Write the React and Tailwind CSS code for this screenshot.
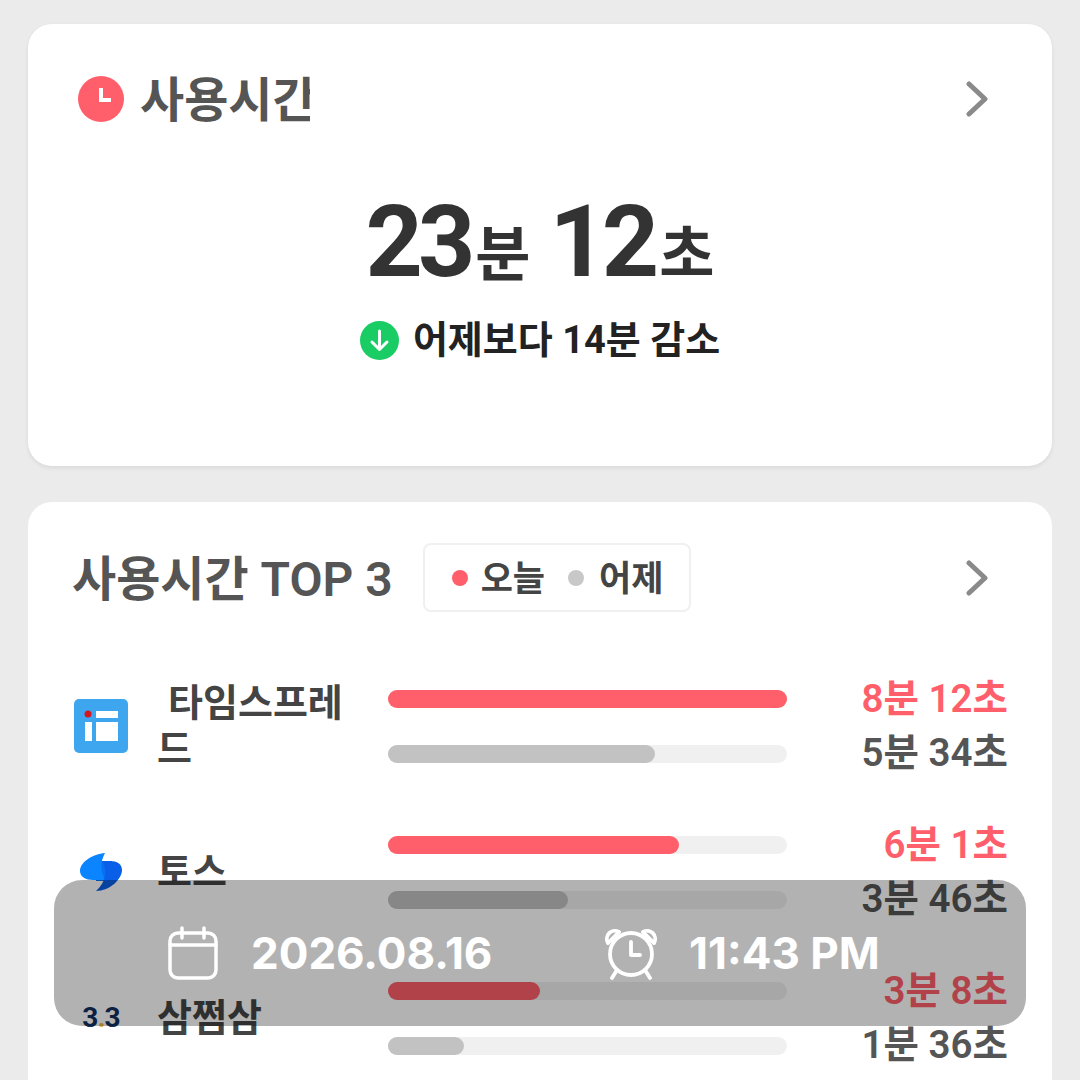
import React from "react";

const font = "font-['Roboto','Noto_Sans_CJK_KR',sans-serif]";

const apps = [
  { name: "타임스프레드", icon: "sheet", today: "8분 12초", todayW: "100%", yest: "5분 34초", yestW: "67%" },
  { name: "토스", icon: "toss", today: "6분 1초", todayW: "73%", yest: "3분 46초", yestW: "45%" },
  { name: "삼쩜삼", icon: "three", today: "3분 8초", todayW: "38%", yest: "1분 36초", yestW: "19%" },
];

const Chevron = () => (
  <svg width="24" height="36" viewBox="0 0 24 36" fill="none" stroke="#8a8a8a" strokeWidth="5" strokeLinecap="round" strokeLinejoin="round">
    <path d="M4 3l16 15L4 33" />
  </svg>
);

const AppIcon = ({ type }) => {
  if (type === "sheet") {
    return (
      <svg width="54" height="54" viewBox="0 0 54 54">
        <rect width="54" height="54" rx="5" fill="#3ea6ee" />
        <rect x="22" y="12" width="22" height="7" fill="#fff" />
        <rect x="11" y="23" width="7" height="19" fill="#fff" />
        <rect x="22" y="23" width="22" height="19" fill="#fff" />
        <circle cx="14" cy="15" r="3.5" fill="#d4161f" />
      </svg>
    );
  }
  if (type === "toss") {
    return (
      <svg width="42" height="38" viewBox="0 0 42 38">
        <path d="M16 8h16v20H16z" fill="#0a6ff0" />
        <path d="M25 0C13 1 0 9 0 18c0 6 6 9 13 9h13c-6-8-6-18-1-27z" fill="#0a84ff" />
        <path d="M16 38c14 0 26-12 26-21 0-6-5-9-12-9h-8c6 9 4 21-6 30z" fill="#0a5fe8" />
      </svg>
    );
  }
  return (
    <span className="text-[28px] leading-none font-bold text-[#12305f] tracking-[-1px]">
      3<span className="text-[#e9b54a]">.</span>3
    </span>
  );
};

const Bar = ({ width, color }) => (
  <div className="h-[18px] w-full rounded-full bg-[#f0f0f0]">
    <div className={`h-full rounded-full ${color}`} style={{ width }} />
  </div>
);

const AppRow = ({ app }) => (
  <div className="flex h-[108px] items-center">
    <div className="flex w-[58px] shrink-0 justify-center">
      <AppIcon type={app.icon} />
    </div>
    <div className="ml-[27px] w-[203px] shrink-0 text-[38px] leading-[46px] font-bold text-[#444] break-all">
      {app.icon === "sheet" ? <span className="ml-[11px]" /> : null}
      {app.name}
    </div>
    <div className="ml-[28px] flex w-[399px] shrink-0 flex-col gap-[37px]">
      <Bar width={app.todayW} color="bg-[#ff5f6b]" />
      <Bar width={app.yestW} color="bg-[#c2c2c2]" />
    </div>
    <div className="flex-1 text-right text-[38.5px] leading-[54px] font-semibold whitespace-nowrap">
      <div className="text-[#ff5f6b]">{app.today}</div>
      <div className="text-[#555]">{app.yest}</div>
    </div>
  </div>
);

const App = () => {
  return (
    <div className={`relative h-[1080px] w-[1080px] overflow-hidden bg-[#ebebeb] px-[28px] pt-[24px] ${font}`}>
      <div className="h-[442px] rounded-[24px] bg-white pt-[52px] shadow-[0_2px_4px_rgba(0,0,0,0.08)]">
        <div className="flex h-[46px] items-center justify-between pr-[63px] pl-[50px]">
          <div className="flex items-center gap-[16px]">
            <svg width="46" height="46" viewBox="0 0 46 46">
              <circle cx="23" cy="23" r="23" fill="#ff5f6b" />
              <path d="M23 12v12h10" fill="none" stroke="#fff" strokeWidth="4" />
            </svg>
            <div className="w-[170px] overflow-hidden pt-[4px] text-[48px] leading-[50px] font-semibold whitespace-nowrap text-[#555]">사용시간</div>
          </div>
          <Chevron />
        </div>
        <div className="mt-[75px] text-center text-[#333] leading-[90px] font-bold whitespace-nowrap">
          <span className="text-[100px] tracking-[-5px]">23</span>
          <span className="ml-[5px] text-[60px]">분 </span>
          <span className="ml-[4px] text-[100px] tracking-[-5px]">12</span>
          <span className="ml-[5px] text-[60px]">초</span>
        </div>
        <div className="mt-[2px] flex items-center justify-center gap-[14px]">
          <svg width="39" height="39" viewBox="0 0 39 39">
            <circle cx="19.5" cy="19.5" r="19.5" fill="#19cc63" />
            <path d="M19.5 10v18M12 21l7.5 7.5L27 21" fill="none" stroke="#fff" strokeWidth="3" strokeLinecap="round" strokeLinejoin="round" />
          </svg>
          <div className="text-[38px] leading-[44px] font-bold text-[#222]">어제보다 14분 감소</div>
        </div>
      </div>

      <div className="mt-[36px] h-[700px] rounded-[24px] bg-white px-[44px] pt-[41px]">
        <div className="flex h-[69px] items-center">
          <div className="pt-[4px] text-[48px] leading-none font-semibold whitespace-nowrap text-[#555]">사용시간 TOP 3</div>
          <div className="ml-[30px] flex h-[69px] w-[268px] items-center rounded-[8px] border-2 border-[#f0f0f0] pl-[27px] text-[35px] font-semibold text-[#444]">
            <span className="h-[16px] w-[16px] shrink-0 rounded-full bg-[#ff5f6b]" />
            <span className="ml-[13px] pt-[6px]">오늘</span>
            <span className="ml-[23px] h-[16px] w-[16px] shrink-0 rounded-full bg-[#c8c8c8]" />
            <span className="ml-[15px] pt-[6px]">어제</span>
          </div>
          <div className="ml-auto mr-[19px]">
            <Chevron />
          </div>
        </div>
        <div className="mt-[60px] flex flex-col gap-[38px]">
          {apps.map((app) => (
            <AppRow key={app.name} app={app} />
          ))}
        </div>
      </div>

      <div className="absolute top-[880px] left-[54px] flex h-[146px] w-[972px] items-center rounded-[28px] bg-black/30 pl-[114px] font-['Inter',sans-serif] text-[44px] font-bold text-white">
        <svg width="50" height="54" viewBox="0 0 50 54" fill="none" stroke="#fff" strokeWidth="3.5" strokeLinecap="round">
          <rect x="2" y="7" width="46" height="45" rx="8" />
          <path d="M2 19h46M14 2v10M36 2v10" />
        </svg>
        <span className="ml-[33px] w-[352px]">2026.08.16</span>
        <svg width="56" height="54" viewBox="0 0 56 54" fill="none" stroke="#fff" strokeWidth="3.8" strokeLinecap="round" strokeLinejoin="round">
          <circle cx="28" cy="28" r="21" />
          <path d="M28 16v13h9" />
          <path d="M5 17a8 8 0 0 1 11-11M51 17A8 8 0 0 0 40 6" />
          <path d="M5 17L16 6M51 17L40 6" />
          <path d="M14 44l-5 8M42 44l5 8" />
        </svg>
        <span className="ml-[30px] whitespace-nowrap">11:43 PM</span>
      </div>
    </div>
  );
};

export default App;
